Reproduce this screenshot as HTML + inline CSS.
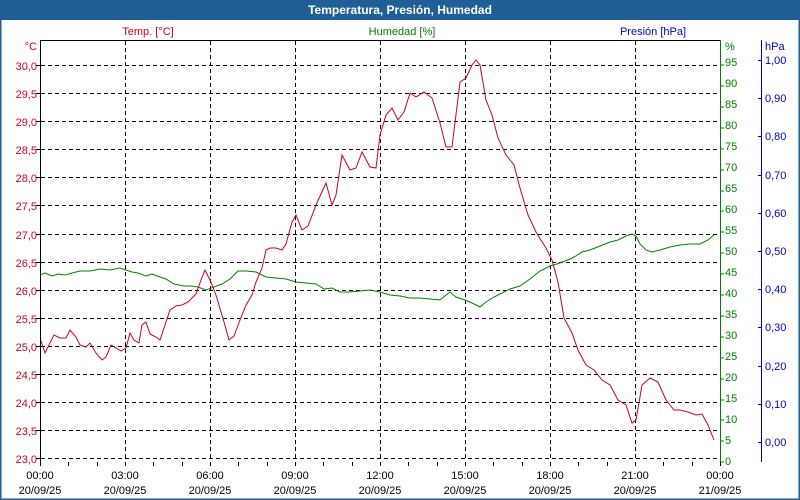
<!DOCTYPE html>
<html><head><meta charset="utf-8"><style>
html,body{margin:0;padding:0;width:800px;height:500px;overflow:hidden;background:#fff}
</style></head><body>
<svg width="800" height="500" xmlns="http://www.w3.org/2000/svg" font-family="Liberation Sans, DejaVu Sans, sans-serif" font-size="11">
<rect x="0" y="0" width="800" height="500" fill="#fff"/>
<rect x="0.5" y="0.5" width="799" height="499" fill="none" stroke="#1f5f96" stroke-width="2"/>
<rect x="0" y="0" width="800" height="20" fill="#1f5f96"/>
<text x="400" y="14" text-anchor="middle" fill="#fff" font-weight="bold" font-size="12">Temperatura, Presión, Humedad</text>
<text x="148" y="35" text-anchor="middle" fill="#cc0022">Temp. [°C]</text>
<text x="402" y="35" text-anchor="middle" fill="#008000">Humedad [%]</text>
<text x="653" y="35" text-anchor="middle" fill="#0000c0">Presión [hPa]</text>
<g stroke="#000" stroke-dasharray="4,3" stroke-width="1">
<line x1="41" x2="720" y1="65.5" y2="65.5"/><line x1="41" x2="720" y1="93.5" y2="93.5"/><line x1="41" x2="720" y1="121.5" y2="121.5"/><line x1="41" x2="720" y1="149.5" y2="149.5"/><line x1="41" x2="720" y1="177.5" y2="177.5"/><line x1="41" x2="720" y1="205.5" y2="205.5"/><line x1="41" x2="720" y1="234.5" y2="234.5"/><line x1="41" x2="720" y1="262.5" y2="262.5"/><line x1="41" x2="720" y1="290.5" y2="290.5"/><line x1="41" x2="720" y1="318.5" y2="318.5"/><line x1="41" x2="720" y1="346.5" y2="346.5"/><line x1="41" x2="720" y1="374.5" y2="374.5"/><line x1="41" x2="720" y1="402.5" y2="402.5"/><line x1="41" x2="720" y1="430.5" y2="430.5"/><line x1="41" x2="720" y1="458.5" y2="458.5"/>
<line y1="41" y2="460" x1="125.5" x2="125.5"/><line y1="41" y2="460" x1="210.5" x2="210.5"/><line y1="41" y2="460" x1="295.5" x2="295.5"/><line y1="41" y2="460" x1="380.5" x2="380.5"/><line y1="41" y2="460" x1="465.5" x2="465.5"/><line y1="41" y2="460" x1="550.5" x2="550.5"/><line y1="41" y2="460" x1="635.5" x2="635.5"/>
</g>
<line x1="40" y1="40.5" x2="720" y2="40.5" stroke="#000"/>
<line x1="40.5" y1="40" x2="40.5" y2="462" stroke="#000"/>
<g stroke="#000">
<path d="M40.5 462v4M68.5 462v4M97.5 462v4M125.5 462v4M153.5 462v4M182.5 462v4M210.5 462v4M238.5 462v4M267.5 462v4M295.5 462v4M323.5 462v4M352.5 462v4M380.5 462v4M408.5 462v4M437.5 462v4M465.5 462v4M493.5 462v4M522.5 462v4M550.5 462v4M578.5 462v4M607.5 462v4M635.5 462v4M663.5 462v4M692.5 462v4M720.5 462v4"/>
<path d="M36 65.5h4M36 93.5h4M36 121.5h4M36 149.5h4M36 177.5h4M36 205.5h4M36 234.5h4M36 262.5h4M36 290.5h4M36 318.5h4M36 346.5h4M36 374.5h4M36 402.5h4M36 430.5h4M36 458.5h4"/>
</g>
<g fill="#cc0022" text-anchor="end">
<text x="37" y="50">°C</text>
<text x="37" y="70">30,0</text><text x="37" y="98">29,5</text><text x="37" y="126">29,0</text><text x="37" y="154">28,5</text><text x="37" y="182">28,0</text><text x="37" y="210">27,5</text><text x="37" y="239">27,0</text><text x="37" y="267">26,5</text><text x="37" y="295">26,0</text><text x="37" y="323">25,5</text><text x="37" y="351">25,0</text><text x="37" y="379">24,5</text><text x="37" y="407">24,0</text><text x="37" y="435">23,5</text><text x="37" y="463">23,0</text>
</g>
<line x1="720.5" y1="40" x2="720.5" y2="462" stroke="#008000"/>
<g stroke="#008000"><path d="M720 65h4M720 86h4M720 107h4M720 128h4M720 149h4M720 170h4M720 191h4M720 211h4M720 232h4M720 253h4M720 274h4M720 295h4M720 316h4M720 337h4M720 358h4M720 379h4M720 400h4M720 420h4M720 441h4M720 462h4"/></g>
<g fill="#008000">
<text x="725" y="50">%</text>
<text x="725" y="66">95</text><text x="725" y="87">90</text><text x="725" y="108">85</text><text x="725" y="129">80</text><text x="725" y="150">75</text><text x="725" y="171">70</text><text x="725" y="192">65</text><text x="725" y="213">60</text><text x="725" y="234">55</text><text x="725" y="255">50</text><text x="725" y="276">45</text><text x="725" y="297">40</text><text x="725" y="318">35</text><text x="725" y="339">30</text><text x="725" y="360">25</text><text x="725" y="381">20</text><text x="725" y="402">15</text><text x="725" y="423">10</text><text x="725" y="444">5</text><text x="725" y="465">0</text>
</g>
<line x1="761.5" y1="40" x2="761.5" y2="462" stroke="#0000c0"/>
<g stroke="#0000c0"><path d="M758 60.5h3M758 98.5h3M758 136.5h3M758 175.5h3M758 213.5h3M758 251.5h3M758 289.5h3M758 327.5h3M758 366.5h3M758 404.5h3M758 442.5h3"/></g>
<g fill="#0000c0">
<text x="765" y="50">hPa</text>
<text x="765" y="64">1,00</text><text x="765" y="102">0,90</text><text x="765" y="140">0,80</text><text x="765" y="179">0,70</text><text x="765" y="217">0,60</text><text x="765" y="255">0,50</text><text x="765" y="293">0,40</text><text x="765" y="331">0,30</text><text x="765" y="370">0,20</text><text x="765" y="408">0,10</text><text x="765" y="446">0,00</text>
</g>
<g fill="#000" text-anchor="middle">
<text x="40" y="479">00:00</text><text x="40" y="494">20/09/25</text>
<text x="125" y="479">03:00</text><text x="125" y="494">20/09/25</text>
<text x="210" y="479">06:00</text><text x="210" y="494">20/09/25</text>
<text x="295" y="479">09:00</text><text x="295" y="494">20/09/25</text>
<text x="380" y="479">12:00</text><text x="380" y="494">20/09/25</text>
<text x="465" y="479">15:00</text><text x="465" y="494">20/09/25</text>
<text x="550" y="479">18:00</text><text x="550" y="494">20/09/25</text>
<text x="635" y="479">21:00</text><text x="635" y="494">20/09/25</text>
<text x="720" y="479">00:00</text><text x="720" y="494">21/09/25</text>
</g>
<polyline fill="none" stroke="#008000" points="40,275 45,273 52,276 58,274 66,275 72,273 80,271 90,271 100,269 110,270 120,268 126,270 132,272 138,273 146,276 152,274 160,277 166,279 174,284 184,286 192,286 198,287 206,290 214,287 222,284 230,279 238,271 246,271 256,272 266,277 276,278 286,279 296,282 306,283 316,284 324,289 332,288 340,292 350,292 360,291 370,290 380,292 390,295 400,296 410,298 420,298 430,299 440,300 446,295 450,292 456,297 462,299 470,302 476,305 480,307 486,302 494,297 502,293 510,289 520,286 530,279 540,271 550,266 560,263 570,259 576,256 582,252 590,250 600,246 610,242 618,240 626,236 632,234 636,236 640,244 646,250 652,252 660,250 670,247 680,245 690,244 700,244 708,240 714,235"/>
<polyline fill="none" stroke="#cc0022" points="41,341 45,353 54,335 60,338 66,338 70,330 76,337 80,345 86,347 90,343 96,353 102,360 106,357 111,345 116,348 121,351 126,348 130,333 134,340 139,343 142,325 146,322 150,334 156,337 160,340 164,328 170,310 176,306 182,305 188,302 196,294 201,280 205,270 210,280 216,295 224,322 229,340 234,336 240,320 246,305 252,295 256,282 262,268 266,250 270,248 276,248 282,250 286,244 292,222 296,215 302,230 308,226 316,205 326,183 332,205 336,195 342,155 350,170 356,168 362,152 370,167 376,168 380,135 386,115 392,108 398,120 404,112 410,93 416,97 424,92 432,98 440,123 446,147 452,147 460,82 466,78 472,65 476,60 480,65 486,100 492,115 498,138 506,155 514,165 520,188 528,215 536,232 546,248 552,260 558,282 564,318 572,333 578,350 586,365 594,370 602,380 610,385 618,400 626,405 632,423 636,420 642,385 650,378 658,382 666,400 674,410 680,410 688,412 696,415 702,414 708,425 714,440"/>
</svg>
</body></html>
